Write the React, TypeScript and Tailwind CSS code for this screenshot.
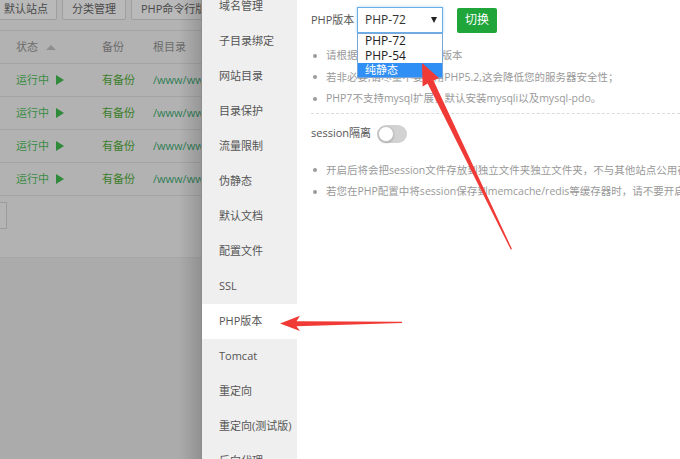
import React from "react";

const sideItems = [
  "域名管理",
  "子目录绑定",
  "网站目录",
  "目录保护",
  "流量限制",
  "伪静态",
  "默认文档",
  "配置文件",
  "SSL",
  "PHP版本",
  "Tomcat",
  "重定向",
  "重定向(测试版)",
  "反向代理",
];

const phpTips = [
  "请根据您的程序需求选择版本",
  "若非必要,请尽量不要使用PHP5.2,这会降低您的服务器安全性；",
  "PHP7不支持mysql扩展，默认安装mysqli以及mysql-pdo。",
];

const sessionTips = [
  "开启后将会把session文件存放到独立文件夹独立文件夹，不与其他站点公用存储位置",
  "若您在PHP配置中将session保存到memcache/redis等缓存器时，请不要开启此选项。",
];

function Bullet({ text }: { text: string }) {
  return (
    <li className="flex items-center whitespace-nowrap pl-[2px]">
      <span className="mr-[9px] h-[4px] w-[4px] shrink-0 rounded-full bg-[#9a9a9a]" />
      <span>{text}</span>
    </li>
  );
}

function SiteList() {
  return (
    <div className="relative flex w-[201px] shrink-0 flex-col overflow-hidden bg-[#ababab] text-[11px]">
      <div className="flex h-[31px] shrink-0 items-start gap-[5px] border-b border-[#a4a4a4] bg-[#b3b3b3] whitespace-nowrap">
        <div className="ml-[-6px] mt-[-2px] flex h-[22px] shrink-0 items-center rounded-[2px] border border-[#9e9e9e] bg-[#b9b9b9] pl-[9px] pr-[8px] text-[#4a4a4a]">
          默认站点
        </div>
        <div className="mt-[-2px] flex h-[22px] shrink-0 items-center rounded-[2px] border border-[#9e9e9e] bg-[#b9b9b9] px-[9px] text-[#4a4a4a]">
          分类管理
        </div>
        <div className="mt-[-2px] flex h-[22px] shrink-0 items-center rounded-[2px] border border-[#9e9e9e] bg-[#b9b9b9] px-[9px] text-[#4a4a4a]">
          PHP命令行版本
        </div>
      </div>
      <div className="flex h-[33px] shrink-0 items-center border-b border-[#a4a4a4] bg-[#b2b2b2] whitespace-nowrap text-[#6c6c6c]">
        <div className="flex w-[102px] shrink-0 items-center pl-[16px]">
          状态
          <span className="ml-[8px] h-0 w-0 border-x-[5px] border-b-[5px] border-x-transparent border-b-[#8e8e8e]" />
        </div>
        <div className="w-[51px] shrink-0">备份</div>
        <div>根目录</div>
      </div>
      {[0, 1, 2, 3].map((i) => (
        <div
          key={i}
          className="flex h-[33px] shrink-0 items-center border-b border-[#a4a4a4] bg-[#b2b2b2] whitespace-nowrap"
        >
          <div className="flex w-[102px] shrink-0 items-center pl-[16px] text-[#3a8c44]">
            运行中
            <span className="ml-[7px] h-0 w-0 border-y-[5px] border-l-[8px] border-y-transparent border-l-[#2f8a3a]" />
          </div>
          <div className="w-[51px] shrink-0 text-[#3d7f2c]">有备份</div>
          <div className="shrink-0 text-[#2f7d55]">/www/wwwroot</div>
        </div>
      ))}
      <div className="h-[62px] shrink-0 border-b border-[#a6a6a6] bg-[#b2b2b2] pt-[6px]">
        <div className="ml-[-20px] h-[27px] w-[27px] border border-[#9c9c9c] bg-[#b4b4b4]" />
      </div>
      <div className="flex-1 bg-[#ababab]" />
      <div className="pointer-events-none absolute inset-y-0 right-0 w-[22px] bg-gradient-to-r from-transparent to-black/15" />
    </div>
  );
}

function SideMenu() {
  return (
    <div className="w-[96px] shrink-0 overflow-hidden border-l border-[#8c8c8c] bg-[#efefef]">
      <div className="mt-[-11px]">
        {sideItems.map((item) => (
          <div
            key={item}
            className={
              item === "PHP版本"
                ? "flex h-[35px] items-center bg-white pl-[17px] text-[11px] whitespace-nowrap text-[#555]"
                : "flex h-[35px] items-center pl-[17px] text-[11px] whitespace-nowrap text-[#555]"
            }
          >
            {item}
          </div>
        ))}
      </div>
    </div>
  );
}

function PhpPanel() {
  return (
    <div className="min-w-0 flex-1 overflow-hidden bg-white pl-[14px] text-[11px]">
      <div className="mt-[7px] flex h-[26px] items-center">
        <span className="w-[46px] shrink-0 whitespace-nowrap text-[#555]">PHP版本</span>
        <div className="relative h-[26px] w-[86px] shrink-0 text-[12px]">
          <div className="flex h-full items-center justify-between border border-[#66afe9] pl-[7px] pr-[5px] text-[#333] shadow-[0_0_3px_rgba(102,175,233,0.5)]">
            <span>PHP-72</span>
            <span className="h-0 w-0 border-x-[3.5px] border-t-[6px] border-x-transparent border-t-[#222]" />
          </div>
          <div className="absolute left-0 top-full z-10 w-[86px] border border-[#7da6d8] bg-white text-[#222]">
            <div className="flex h-[14.5px] items-center pl-[7px]">PHP-72</div>
            <div className="flex h-[14.5px] items-center pl-[7px]">PHP-54</div>
            <div className="flex h-[14px] items-center bg-[#2f8ff5] pl-[7px] text-[11px] text-white">纯静态</div>
          </div>
        </div>
        <button className="ml-[14px] flex h-[25px] w-[40px] shrink-0 items-center justify-center rounded-[2px] bg-[#20a53a] text-[12px] text-white">
          切换
        </button>
      </div>
      <ul className="mt-[12px] text-[10.5px] leading-[21.5px] text-[#999]">
        {phpTips.map((t) => (
          <Bullet key={t} text={t} />
        ))}
      </ul>
      <div className="mt-[3px] border-t border-dashed border-[#dcdcdc]" />
      <div className="mt-[10px] flex h-[20px] items-center">
        <span className="mr-[6px] whitespace-nowrap text-[#555]">session隔离</span>
        <div className="flex h-[18px] w-[30px] items-center rounded-full bg-[#d2d2d2] pl-[1px]">
          <div className="h-[16px] w-[16px] rounded-full border border-[#c4c4c4] bg-white shadow-[0_1px_2px_rgba(0,0,0,0.2)]" />
        </div>
      </div>
      <ul className="mt-[16px] text-[10.5px] leading-[21.5px] text-[#999]">
        {sessionTips.map((t) => (
          <Bullet key={t} text={t} />
        ))}
      </ul>
    </div>
  );
}

function Arrows() {
  return (
    <svg className="pointer-events-none absolute inset-0 z-20" width="680" height="459" viewBox="0 0 680 459">
      <polygon
        fill="#f03a36"
        points="422,63 439,78 433.5,80.5 512,249 510.8,249.6 427.6,83.4 422.6,86.5"
      />
      <polygon
        fill="#f03a36"
        points="280,323.5 300,315.8 296.5,321.2 402,321.8 402,323 296.5,326.2 300,331"
      />
    </svg>
  );
}

export default function App() {
  return (
    <div className="relative flex h-[459px] w-[680px] overflow-hidden bg-white font-['Open_Sans','Noto_Sans_CJK_SC',sans-serif]">
      <SiteList />
      <SideMenu />
      <PhpPanel />
      <Arrows />
    </div>
  );
}
